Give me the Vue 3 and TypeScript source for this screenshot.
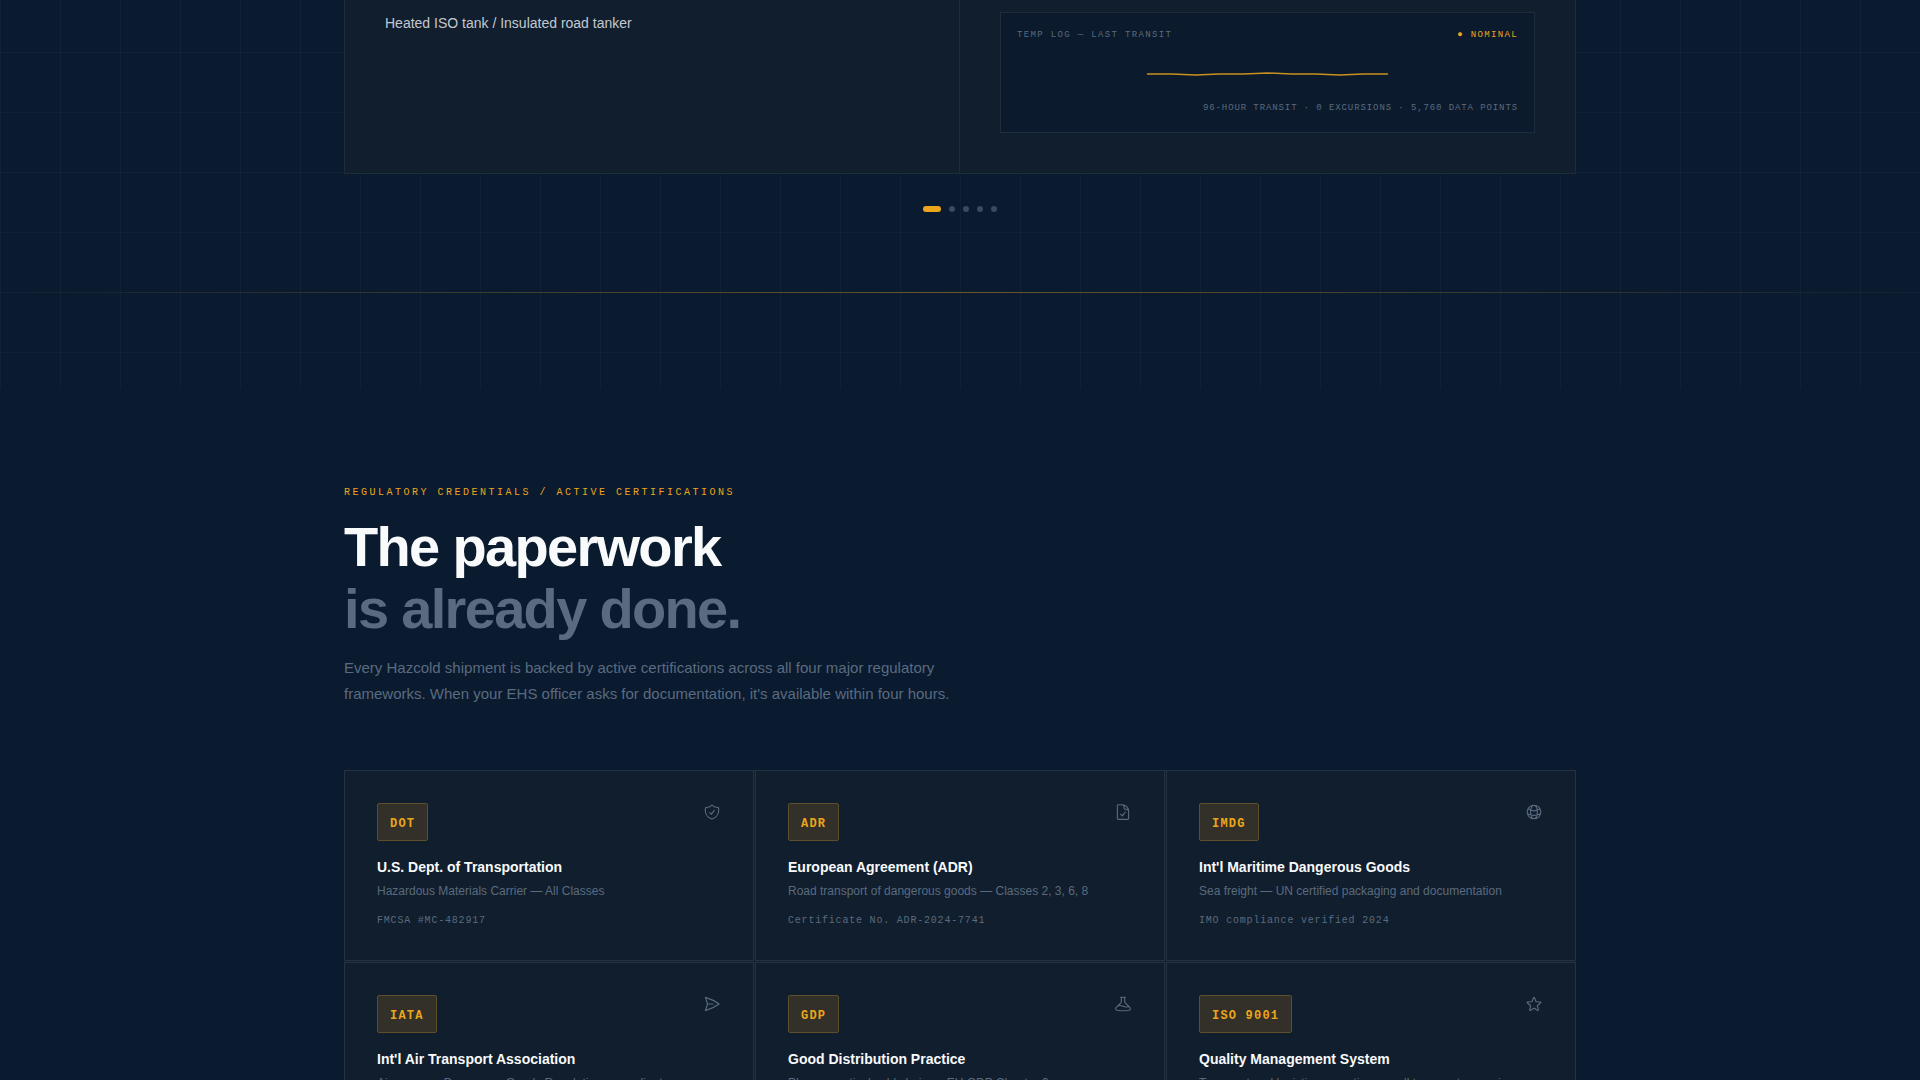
<script setup lang="ts">
import { ref } from 'vue'

interface Cert {
  code: string
  name: string
  detail: string
  meta: string
  icon: string
}

const slides = 5
const active = ref(0)

const certs: Cert[] = [
  {
    code: 'DOT',
    name: 'U.S. Dept. of Transportation',
    detail: 'Hazardous Materials Carrier — All Classes',
    meta: 'FMCSA #MC-482917',
    icon: 'M9 12.75L11.25 15 15 9.75m-3-7.036A11.959 11.959 0 013.598 6 11.99 11.99 0 003 9.749c0 5.592 3.824 10.29 9 11.623 5.176-1.332 9-6.03 9-11.622 0-1.31-.21-2.571-.598-3.751h-.152c-3.196 0-6.1-1.248-8.25-3.285z',
  },
  {
    code: 'ADR',
    name: 'European Agreement (ADR)',
    detail: 'Road transport of dangerous goods — Classes 2, 3, 6, 8',
    meta: 'Certificate No. ADR-2024-7741',
    icon: 'M10.125 2.25h-4.5c-.621 0-1.125.504-1.125 1.125v17.25c0 .621.504 1.125 1.125 1.125h12.75c.621 0 1.125-.504 1.125-1.125v-9M10.125 2.25h.375a9 9 0 019 9v.375M10.125 2.25A3.375 3.375 0 0113.5 5.625v1.5c0 .621.504 1.125 1.125 1.125h1.5a3.375 3.375 0 013.375 3.375M9 15l2.25 2.25L15 12',
  },
  {
    code: 'IMDG',
    name: "Int'l Maritime Dangerous Goods",
    detail: 'Sea freight — UN certified packaging and documentation',
    meta: 'IMO compliance verified 2024',
    icon: 'M12 21a9.004 9.004 0 008.716-6.747M12 21a9.004 9.004 0 01-8.716-6.747M12 21c2.485 0 4.5-4.03 4.5-9S14.485 3 12 3m0 18c-2.485 0-4.5-4.03-4.5-9S9.515 3 12 3m0 0a8.997 8.997 0 017.843 4.582M12 3a8.997 8.997 0 00-7.843 4.582m15.686 0A11.953 11.953 0 0112 10.5c-2.998 0-5.74-1.1-7.843-2.918m15.686 0A8.959 8.959 0 0121 12c0 .778-.099 1.533-.284 2.253m0 0A17.919 17.919 0 0112 16.5c-3.162 0-6.133-.815-8.716-2.247m0 0A9.015 9.015 0 013 12c0-1.605.42-3.113 1.157-4.418',
  },
  {
    code: 'IATA',
    name: "Int'l Air Transport Association",
    detail: 'Air cargo — Dangerous Goods Regulations compliant',
    meta: 'IATA DGR 65th Edition',
    icon: 'M6 12L3.269 3.126A59.768 59.768 0 0121.485 12 59.77 59.77 0 013.27 20.876L5.999 12zm0 0h7.5',
  },
  {
    code: 'GDP',
    name: 'Good Distribution Practice',
    detail: 'Pharmaceutical cold chain — EU GDP Chapter 9',
    meta: 'GDP certificate 2024',
    icon: 'M9.75 3.104v5.714a2.25 2.25 0 01-.659 1.591L5 14.5M9.75 3.104c-.251.023-.501.05-.75.082m.75-.082a24.301 24.301 0 014.5 0m0 0v5.714c0 .597.237 1.17.659 1.591L19.8 15.3M14.25 3.104c.251.023.501.05.75.082M19.8 15.3l-1.57.393A9.065 9.065 0 0112 15a9.065 9.065 0 00-6.23-.693L5 14.5m14.8.8l1.402 1.402c1.232 1.232.65 3.318-1.067 3.611A48.309 48.309 0 0112 21c-2.773 0-5.491-.235-8.135-.687-1.718-.293-2.3-2.379-1.067-3.61L5 14.5',
  },
  {
    code: 'ISO 9001',
    name: 'Quality Management System',
    detail: 'Transport and logistics operations — all temperature regimes',
    meta: 'ISO 9001:2015',
    icon: 'M11.48 3.499a.562.562 0 011.04 0l2.125 5.111a.563.563 0 00.475.345l5.518.442c.499.04.701.663.321.988l-4.204 3.602a.563.563 0 00-.182.557l1.285 5.385a.562.562 0 01-.84.61l-4.725-2.885a.563.563 0 00-.586 0L6.982 20.54a.562.562 0 01-.84-.61l1.285-5.386a.562.562 0 00-.182-.557l-4.204-3.602a.563.563 0 01.321-.988l5.518-.442a.563.563 0 00.475-.345L11.48 3.5z',
  },
]
</script>

<template>
  <main class="page">
    <section class="fleet">
      <div class="container">
        <div class="spec-card">
          <div class="spec-col">
            <p class="spec-value">Heated ISO tank / Insulated road tanker</p>
          </div>
          <div class="spec-col">
            <div class="temp-log">
              <div class="log-head">
                <span>TEMP LOG — LAST TRANSIT</span>
                <span class="nominal">● NOMINAL</span>
              </div>
              <svg class="log-chart" viewBox="0 0 240 40" aria-hidden="true">
                <polyline points="0,20 24,20 48,21 72,20 96,20 120,19 144,20 168,20 192,21 216,20 240,20" />
              </svg>
              <p class="log-foot">96-HOUR TRANSIT · 0 EXCURSIONS · 5,760 DATA POINTS</p>
            </div>
          </div>
        </div>
        <div class="dots">
          <button
            v-for="n in slides"
            :key="n"
            type="button"
            class="dot"
            :class="{ on: active === n - 1 }"
            :aria-label="`Slide ${n}`"
            @click="active = n - 1"
          ></button>
        </div>
      </div>
      <div class="divider"></div>
    </section>

    <section class="credentials">
      <div class="container">
        <p class="eyebrow">REGULATORY CREDENTIALS / ACTIVE CERTIFICATIONS</p>
        <h2 class="heading">The paperwork<br /><span>is already done.</span></h2>
        <p class="lead">
          Every Hazcold shipment is backed by active certifications across all four major regulatory
          frameworks. When your EHS officer asks for documentation, it's available within four hours.
        </p>
        <div class="grid">
          <article v-for="c in certs" :key="c.code" class="cert">
            <div class="cert-top">
              <span class="badge">{{ c.code }}</span>
              <svg class="icon" viewBox="0 0 24 24" aria-hidden="true"><path :d="c.icon" /></svg>
            </div>
            <h3>{{ c.name }}</h3>
            <p class="detail">{{ c.detail }}</p>
            <p class="meta">{{ c.meta }}</p>
          </article>
        </div>
      </div>
    </section>
  </main>
</template>

<style>
body {
  margin: 0;
  background: #0a1a2f;
}
</style>

<style scoped>
.page {
  height: 100vh;
  overflow: hidden;
  background: #0a1a2f;
  color: #f8fafc;
  font-family: "Liberation Sans", Arial, sans-serif;
}
p,
h2,
h3 {
  margin: 0;
}
.container {
  box-sizing: border-box;
  max-width: 1280px;
  margin: 0 auto;
  padding: 0 24px;
}
.fleet {
  padding-bottom: 96px;
  background-image:
    linear-gradient(rgba(90, 107, 130, 0.08) 1px, transparent 1px),
    linear-gradient(90deg, rgba(90, 107, 130, 0.08) 1px, transparent 1px);
  background-size: 60px 60px;
  background-position: 0 52px;
}
.spec-card {
  display: grid;
  grid-template-columns: 1fr 1fr;
  background: #111e2d;
  border: 1px solid #1f2d3a;
  border-top: 0;
}
.spec-col {
  padding: 12px 40px 40px;
}
.spec-col:first-child {
  border-right: 1px solid #1f2d3a;
}
.spec-value {
  font-size: 14px;
  line-height: 22px;
  color: #c3c9d1;
}
.temp-log {
  padding: 16px;
  background: #0b1a2c;
  border: 1px solid #1f2d3a;
  font-family: "Liberation Mono", "Courier New", monospace;
  font-size: 9px;
  line-height: 12px;
  color: #5a6b7f;
}
.log-head {
  display: flex;
  justify-content: space-between;
  margin-bottom: 13px;
  letter-spacing: 0.15em;
}
.nominal {
  color: #eca61c;
}
.log-chart {
  display: block;
  width: 100%;
  height: 40px;
  margin-bottom: 8px;
  fill: none;
  stroke: #eca61c;
  stroke-width: 1.5;
  stroke-linecap: round;
  stroke-linejoin: round;
  opacity: 0.85;
}
.log-foot {
  padding-bottom: 2px;
  text-align: right;
  letter-spacing: 0.1em;
}
.dots {
  display: flex;
  justify-content: center;
  gap: 8px;
  margin: 32px 0 80px;
}
.dot {
  width: 6px;
  height: 6px;
  padding: 0;
  border: 0;
  border-radius: 3px;
  background: #3b4a5e;
  cursor: pointer;
}
.dot.on {
  width: 18px;
  background: #eca61c;
}
.divider {
  height: 1px;
  background: linear-gradient(90deg, transparent, rgba(236, 166, 28, 0.4), transparent);
}
.credentials {
  padding: 96px 0;
}
.eyebrow {
  margin-bottom: 15px;
  font-family: "Liberation Mono", "Courier New", monospace;
  font-size: 10px;
  line-height: 16px;
  letter-spacing: 0.25em;
  color: #eca61c;
}
.heading {
  margin-bottom: 15px;
  font-size: 56px;
  line-height: 62px;
  font-weight: 700;
  letter-spacing: -0.03em;
}
.heading span {
  color: #5a6b7f;
}
.lead {
  max-width: 620px;
  margin-bottom: 63px;
  font-size: 15px;
  line-height: 26px;
  color: #5a6b7f;
}
.grid {
  display: grid;
  grid-template-columns: repeat(3, 1fr);
  gap: 1px;
  background: #14212f;
}
.cert {
  padding: 32px;
  background: #111e2d;
  border: 1px solid #243341;
}
.cert-top {
  display: flex;
  justify-content: space-between;
  align-items: flex-start;
  margin-bottom: 16px;
}
.badge {
  padding: 8px 12px 4px;
  border: 1px solid #5d4f2a;
  border-radius: 2px;
  background: #323028;
  font-family: "Liberation Mono", "Courier New", monospace;
  font-size: 12px;
  line-height: 24px;
  font-weight: 700;
  letter-spacing: 0.1em;
  color: #eca61c;
}
.icon {
  width: 18px;
  height: 18px;
  fill: none;
  stroke: #5a6b7f;
  stroke-width: 1.5;
  stroke-linecap: round;
  stroke-linejoin: round;
}
.cert h3 {
  margin-bottom: 4px;
  font-size: 14px;
  line-height: 20px;
  font-weight: 700;
}
.detail {
  margin-bottom: 12px;
  font-size: 12px;
  line-height: 20px;
  color: #5a6b7f;
}
.meta {
  font-family: "Liberation Mono", "Courier New", monospace;
  font-size: 10px;
  line-height: 15px;
  letter-spacing: 0.08em;
  color: #5a6b7f;
}
</style>
